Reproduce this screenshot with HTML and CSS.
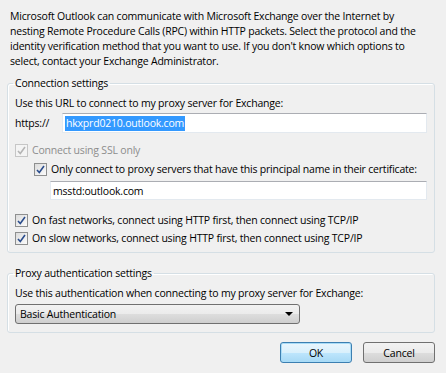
FILE: index.html
```html
<!DOCTYPE html>
<html lang="en">
<head>
    <meta charset="UTF-8">
    <title>Microsoft Exchange Proxy Settings</title>
    <link rel="stylesheet" href="styles.css">
</head>
<body>
    <div class="dialog">
        <p class="intro">Microsoft Outlook can communicate with Microsoft Exchange over the Internet by nesting Remote Procedure Calls (RPC) within HTTP packets. Select the protocol and the identity verification method that you want to use. If you don't know which options to select, contact your Exchange Administrator.</p>

        <fieldset class="group group-conn">
            <legend>Connection settings</legend>
            <div class="line">Use this URL to connect to my proxy server for Exchange:</div>
            <div class="url-row">
                <span class="prefix">https://</span>
                <div class="textbox"><span class="selected">hkxprd0210.outlook.com</span></div>
            </div>
            <label class="check disabled ssl">
                <span class="box"><svg width="9" height="9" viewBox="0 0 9 9"><path d="M1 5 L3.3 7.5 L8 1" fill="none" stroke="#b4b4b4" stroke-width="1.6"/></svg></span>
                Connect using SSL only
            </label>
            <label class="check nested">
                <span class="box"><svg width="9" height="9" viewBox="0 0 9 9"><path d="M1 5 L3.3 7.5 L8 1" fill="none" stroke="#2a4c8c" stroke-width="1.6"/></svg></span>
                Only connect to proxy servers that have this principal name in their certificate:
            </label>
            <div class="textbox principal">msstd:outlook.com</div>
            <label class="check fast">
                <span class="box"><svg width="9" height="9" viewBox="0 0 9 9"><path d="M1 5 L3.3 7.5 L8 1" fill="none" stroke="#2a4c8c" stroke-width="1.6"/></svg></span>
                On fast networks, connect using HTTP first, then connect using TCP/IP
            </label>
            <label class="check slow">
                <span class="box"><svg width="9" height="9" viewBox="0 0 9 9"><path d="M1 5 L3.3 7.5 L8 1" fill="none" stroke="#2a4c8c" stroke-width="1.6"/></svg></span>
                On slow networks, connect using HTTP first, then connect using TCP/IP
            </label>
        </fieldset>

        <fieldset class="group group-auth">
            <legend>Proxy authentication settings</legend>
            <div class="line">Use this authentication when connecting to my proxy server for Exchange:</div>
            <div class="combo">
                <span>Basic Authentication</span>
                <span class="arrow"></span>
            </div>
        </fieldset>

        <div class="buttons">
            <button class="btn btn-default">OK</button>
            <button class="btn">Cancel</button>
        </div>
    </div>
</body>
</html>
```

FILE: styles.css
```css
body {
    margin: 0;
    background-color: #f0f0f0;
    font-family: "Open Sans", "Noto Sans", sans-serif;
    font-size: 10.5px;
    letter-spacing: -0.2px;
    color: #000;
}

.dialog {
    padding: 9px 11px 0 7px;
}

.intro {
    margin: 0 8px 7px 3px;
    line-height: 15px;
}

.group {
    margin: 0;
    padding: 0 7px 6px 7px;
    border: 1px solid #d5dfe5;
    border-radius: 3px;
    box-shadow: inset 1px 1px 0 #fff;
}

.group legend {
    padding: 0 2px;
    margin-left: -2px;
    line-height: 15px;
}

.line {
    line-height: 15px;
    margin-top: 5px;
}

.url-row {
    display: flex;
    align-items: center;
    margin-top: 2px;
}

.prefix {
    width: 47px;
}

.textbox {
    flex: 1;
    height: 18px;
    background: #fff;
    border: 1px solid #e3e9ef;
    border-top-color: #abadb3;
    display: flex;
    align-items: center;
    padding-left: 2px;
}

.selected {
    background: #3399ff;
    color: #fff;
    line-height: 15px;
    padding: 0 1px;
}

.check {
    display: flex;
    align-items: center;
    gap: 4px;
    line-height: 15px;
    white-space: nowrap;
}

.box {
    width: 11px;
    height: 11px;
    border: 1px solid #8e8f8f;
    background: linear-gradient(135deg, #dcdcdc, #fbfbfb);
    display: flex;
    align-items: center;
    justify-content: center;
    flex: none;
}

.disabled {
    color: #8d8d8d;
}

.disabled .box {
    border-color: #c6c6c6;
    background: #f4f4f4;
}

.ssl {
    margin-top: 10px;
}

.nested {
    margin-top: 4px;
    margin-left: 19px;
}

.principal {
    margin: 4px 0 0 35px;
    height: 17px;
}

.fast {
    margin-top: 13px;
}

.slow {
    margin-top: 3px;
}

.group-auth {
    margin-top: 13px;
    padding-bottom: 8px;
}

.combo {
    margin-top: 3px;
    width: 273px;
    height: 18px;
    border: 1px solid #707070;
    border-radius: 3px;
    background: linear-gradient(#f2f2f2 0%, #ebebeb 50%, #dddddd 51%, #cfcfcf 100%);
    display: flex;
    align-items: center;
    justify-content: space-between;
    padding: 0 6px 0 4px;
}

.arrow {
    width: 0;
    height: 0;
    border-left: 4px solid transparent;
    border-right: 4px solid transparent;
    border-top: 4px solid #000;
}

.buttons {
    display: flex;
    justify-content: flex-end;
    gap: 11px;
    margin-top: 9px;
}

.btn {
    width: 72px;
    height: 21px;
    font-family: inherit;
    font-size: 10.5px;
    letter-spacing: inherit;
    border: 1px solid #707070;
    border-radius: 3px;
    background: linear-gradient(#f2f2f2 0%, #ebebeb 50%, #dddddd 51%, #cfcfcf 100%);
    padding: 0;
}

.btn-default {
    border-color: #3c7fb1;
    background: linear-gradient(#eaf6fd 0%, #d9f0fc 50%, #bee6fd 51%, #a7d9f5 100%);
    box-shadow: inset 0 0 0 1px #a9dcf7;
}
```
